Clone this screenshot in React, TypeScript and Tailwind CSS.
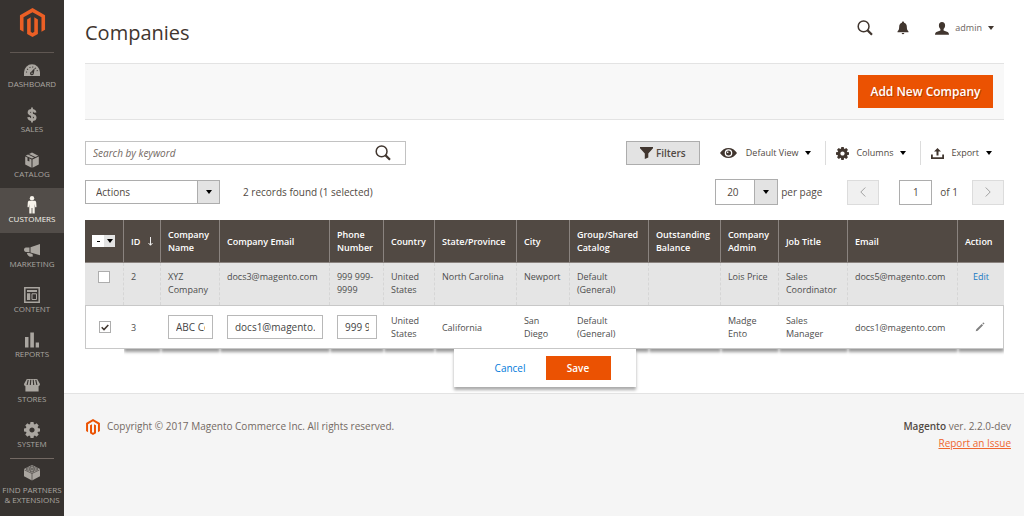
import { useState, type ReactNode } from "react";
import clsx from "clsx";

interface IconProps {
  className?: string;
}

const MagentoLogo = ({ className }: IconProps) => (
  <svg viewBox="0 0 24 24" fill="currentColor" className={className} aria-hidden="true">
    <path d="M12 24l-4.455-2.572v-12l2.97-1.715v12.001l1.485.902 1.485-.902V7.713l2.971 1.715v12L12 24zM22.391 6v12l-2.969 1.714V7.713L12 3.43 4.574 7.713v12.001L1.609 18V6L12 0l10.391 6z" />
  </svg>
);

const SearchIcon = ({ className }: IconProps) => (
  <svg viewBox="0 0 16 16" fill="none" stroke="currentColor" className={className} aria-hidden="true">
    <circle cx="6.6" cy="6.4" r="5.4" strokeWidth="1.5" />
    <path d="M10.6 10.4 15 14.8" strokeWidth="2.2" />
  </svg>
);

const BellIcon = ({ className }: IconProps) => (
  <svg viewBox="0 0 12 14" fill="currentColor" className={className} aria-hidden="true">
    <path d="M6 .6c.7 0 1.1.5 1.1 1.1 1.800.5 2.700 2 2.700 3.900 0 2.900.6 3.900 1.700 4.800v.8H.5v-.8c1.100-.9 1.700-1.900 1.700-4.800 0-1.900.9-3.400 2.700-3.900C4.900 1.100 5.300.6 6 .6zM4.600 12h2.800c-.2.8-.7 1.200-1.400 1.200S4.800 12.800 4.600 12z" />
  </svg>
);

const UserIcon = ({ className }: IconProps) => (
  <svg viewBox="0 0 14 13" fill="currentColor" className={className} aria-hidden="true">
    <path d="M7 0c2 0 3.100 1.300 3.100 3.300 0 1.700-.6 3-1.500 3.800v1.300l4 1.600c.9.4 1.300 1.200 1.400 2.800H0c.1-1.600.5-2.400 1.400-2.800l4-1.600V7.100C4.500 6.300 3.900 5 3.900 3.300 3.900 1.300 5 0 7 0z" />
  </svg>
);

const Caret = ({ className }: IconProps) => (
  <svg viewBox="0 0 6 4" fill="currentColor" className={clsx("h-1 w-1.5 shrink-0", className)} aria-hidden="true">
    <path d="M0 0h6L3 4z" />
  </svg>
);

const FunnelIcon = ({ className }: IconProps) => (
  <svg viewBox="0 0 13 12" fill="currentColor" className={className} aria-hidden="true">
    <path d="M0 0h13v1.200L8.300 6.500v3.900L4.800 12V6.500L0 1.200z" />
  </svg>
);

const EyeIcon = ({ className }: IconProps) => (
  <svg viewBox="0 0 17 10" className={className} aria-hidden="true">
    <path
      fill="currentColor"
      fillRule="evenodd"
      d="M8.500 0C12 0 15 1.900 17 5c-2 3.100-5 5-8.500 5S2 8.100 0 5c2-3.100 5-5 8.500-5zm0 1.200a3.800 3.800 0 1 0 0 7.600 3.800 3.800 0 0 0 0-7.600z"
    />
    <circle cx="8.500" cy="5" r="2.500" fill="currentColor" />
    <circle cx="7.700" cy="4.200" r=".8" fill="#fff" />
  </svg>
);

const GearIcon = ({ className }: IconProps) => (
  <svg viewBox="-8 -8 16 16" fill="currentColor" className={className} aria-hidden="true">
    <circle r="4.400" fill="none" stroke="currentColor" strokeWidth="3.600" />
    {[0, 45, 90, 135, 180, 225, 270, 315].map((angle) => (
      <path key={angle} d="M-2-5.200-1.500-8h3l.5 2.800z" transform={`rotate(${angle})`} />
    ))}
  </svg>
);

const ExportIcon = ({ className }: IconProps) => (
  <svg viewBox="0 0 13 11" fill="currentColor" className={className} aria-hidden="true">
    <path d="M6.500 0 10 3.500H7.500v4h-2v-4H3zM0 6.500h1.800v2.700h9.400V6.500H13V11H0z" />
  </svg>
);

const Chevron = ({ className }: IconProps) => (
  <svg viewBox="0 0 6 10" fill="none" stroke="currentColor" className={className} aria-hidden="true">
    <path d="M5.300.5.800 5l4.500 4.500" />
  </svg>
);

const PencilIcon = ({ className }: IconProps) => (
  <svg viewBox="0 0 10 10" fill="currentColor" className={className} aria-hidden="true">
    <path d="M.7 9.300 1.300 7.300 6.700 1.900l1.400 1.400-5.400 5.400zM7.300 1.300l.8-.8c.4-.3 1.600.9 1.300 1.300l-.8.8z" />
  </svg>
);

const DashboardIcon = ({ className }: IconProps) => (
  <svg viewBox="0 0 16 16" className={className} aria-hidden="true">
    <path fill="currentColor" d="M0 14V10.300a8 8 0 0 1 16 0V14z" />
    <path d="M2.500 10.500A5.500 5.500 0 0 1 13.500 10.500" fill="none" stroke="#373330" strokeWidth="1.100" strokeDasharray="1 1.900" />
    <path fill="#373330" d="M10.800 6 9.800 11.600a1.900 1.900 0 1 1-2.600-1.900z" />
    <circle cx="8" cy="11.300" r=".7" fill="currentColor" />
  </svg>
);

const DollarIcon = ({ className }: IconProps) => (
  <svg viewBox="0 0 16 16" fill="none" stroke="currentColor" className={className} aria-hidden="true">
    <path d="M11.200 5.600C11 3.900 9.800 3.200 8 3.200S4.900 4 4.900 5.400C4.900 8.500 11.300 7 11.300 10.500 11.300 12 10 12.800 8 12.800s-3.300-.9-3.500-2.600" strokeWidth="2.500" />
    <path d="M8 .5v15" strokeWidth="1.800" />
  </svg>
);

const BoxIcon = ({ className }: IconProps) => (
  <svg viewBox="0 0 16 16" fill="currentColor" className={className} aria-hidden="true">
    <path d="M1.200 4.600 7.500 7.500V15.800L1.200 12.400zM14.800 4.600 8.500 7.500V15.800l6.300-3.400zM1.700 3.700 4 2.600l6.100 2.900L8 6.500zM5 2.100 8 .6l6.300 3.100-3.100 1.400z" />
    <path d="M3.500 5.300v3.500l1.900.8V6.300z" fill="#373330" />
  </svg>
);

const PersonIcon = ({ className }: IconProps) => (
  <svg viewBox="0 0 16 18" fill="currentColor" className={className} aria-hidden="true">
    <circle cx="8" cy="2.200" r="2.200" />
    <path d="M5.500 4.700h5c1 0 1.600.7 1.700 1.700l.3 4.300c0 .8-1.200.9-1.400.1L10.700 8v9.500H8.400V12h-.8v5.500H5.300V8l-.4 2.800c-.2.800-1.400.7-1.400-.1l.3-4.300c.1-1 .7-1.700 1.700-1.700z" />
  </svg>
);

const MegaphoneIcon = ({ className }: IconProps) => (
  <svg viewBox="0 0 16 16" fill="currentColor" className={className} aria-hidden="true">
    <path d="M16 2v11.300L6.500 10.400V5.300zM5.500 5.500v4.700L2 10.100C.7 10 0 9 0 7.800s.7-2.200 2-2.300zM2.800 11l2.600.1 3.100 1 .4 2.400-2.500.3C4.500 14.300 3.300 12.900 2.800 11z" />
  </svg>
);

const LayoutIcon = ({ className }: IconProps) => (
  <svg viewBox="0 0 16 16" className={className} aria-hidden="true">
    <path d="M.8.8h14.400v14.400H.8z" fill="none" stroke="currentColor" strokeWidth="1.500" />
    <path d="M3 3h10v2H3zM3 6.300h3.200V13H3z" fill="currentColor" />
    <path d="M8 6.800h4.500v5.700H8z" fill="none" stroke="currentColor" />
  </svg>
);

const BarsIcon = ({ className }: IconProps) => (
  <svg viewBox="0 0 16 16" fill="currentColor" className={className} aria-hidden="true">
    <path d="M1 5h3.500v10.500H1zM6.300.5h3.600v15H6.300zM11.700 10.500H15v5h-3.300z" />
  </svg>
);

const StoreIcon = ({ className }: IconProps) => (
  <svg viewBox="0 0 17 16" className={className} aria-hidden="true">
    <path fill="currentColor" d="M3 1.500h11L17 7c0 1.300-.6 2-1.500 2.200V15h-14V9.200C.6 9 0 8.300 0 7z" />
    <path d="M4.500 2.500 3.300 8M7.200 2.500l-.5 5.500M9.800 2.500l.5 5.500M12.500 2.500l1.200 5.500" stroke="#373330" strokeWidth="1.200" />
  </svg>
);

const BrickIcon = ({ className }: IconProps) => (
  <svg viewBox="0 0 16 16" className={className} aria-hidden="true">
    <path fill="currentColor" d="M0 4.500 8 .5l8 4v7.300L8 16l-8-4.200z" />
    <path d="M.3 5.300 8 9l7.700-3.700M8 9v7" fill="none" stroke="#373330" strokeWidth=".6" />
    <g fill="#aaa6a0" stroke="#373330" strokeWidth=".7">
      <ellipse cx="8" cy="2.700" rx="2" ry="1.100" />
      <ellipse cx="4.300" cy="4.500" rx="2" ry="1.100" />
      <ellipse cx="11.700" cy="4.500" rx="2" ry="1.100" />
      <ellipse cx="8" cy="6.300" rx="2" ry="1.100" />
    </g>
  </svg>
);

const menu = [
  { label: "Dashboard", icon: DashboardIcon },
  { label: "Sales", icon: DollarIcon },
  { label: "Catalog", icon: BoxIcon },
  { label: "Customers", icon: PersonIcon, active: true },
  { label: "Marketing", icon: MegaphoneIcon },
  { label: "Content", icon: LayoutIcon },
  { label: "Reports", icon: BarsIcon },
  { label: "Stores", icon: StoreIcon },
  { label: "System", icon: GearIcon },
];

function Sidebar() {
  return (
    <nav className="w-16 shrink-0 bg-[#373330] text-[8px] leading-[10px] uppercase text-[#aaa6a0]">
      <a href="#" aria-label="Magento Admin" className="flex justify-center pt-2 pb-[15px] text-[#eb5f25]">
        <MagentoLogo className="size-[29px]" />
      </a>
      <div className="mx-[10px] border-t border-[#5f5752]" />
      <ul>
        {menu.map(({ label, icon: Icon, active }) => (
          <li key={label}>
            <a
              href="#"
              className={clsx(
                "flex h-[45px] flex-col items-center pt-2",
                active && "bg-[#524d49] text-[#f7f3eb]"
              )}
            >
              <span className="flex h-[18px] items-center">
                <Icon className={active ? "h-[18px] w-4" : "size-4"} />
              </span>
              {label}
            </a>
          </li>
        ))}
      </ul>
      <div className="mx-[10px] border-t border-[#736963]" />
      <a href="#" className="flex flex-col items-center gap-1 pt-[5px] text-center">
        <BrickIcon className="h-[17px] w-4" />
        <span className="whitespace-nowrap">
          Find Partners
          <br />& Extensions
        </span>
      </a>
    </nav>
  );
}

const columns = [
  { label: "Company Name", width: 59 },
  { label: "Company Email", width: 110 },
  { label: "Phone Number", width: 54 },
  { label: "Country", width: 51 },
  { label: "State/Province", width: 82 },
  { label: "City", width: 53 },
  { label: "Group/Shared Catalog", width: 79 },
  { label: "Outstanding Balance", width: 72 },
  { label: "Company Admin", width: 58 },
  { label: "Job Title", width: 69 },
  { label: "Email", width: 110 },
  { label: "Action", width: 46 },
];

const colWidths = [39, 37, ...columns.map((c) => c.width)];
const TOTAL_WIDTH = colWidths.reduce((sum, width) => sum + width, 0);

const firstRow = [
  "XYZ Company",
  "docs3@magento.com",
  "999 999-9999",
  "United States",
  "North Carolina",
  "Newport",
  "Default (General)",
  "",
  "Lois Price",
  "Sales Coordinator",
  "docs5@magento.com",
];

const secondRow = [
  "United States",
  "California",
  "San Diego",
  "Default (General)",
  "",
  "Madge Ento",
  "Sales Manager",
  "docs1@magento.com",
];

function RowCheckbox({ label, defaultChecked }: { label: string; defaultChecked?: boolean }) {
  const [checked, setChecked] = useState(!!defaultChecked);
  return (
    <span className="mx-auto grid size-3 place-items-center">
      <input
        type="checkbox"
        aria-label={label}
        checked={checked}
        onChange={(e) => setChecked(e.target.checked)}
        className="col-start-1 row-start-1 size-3 appearance-none border border-[#adadad] bg-white"
      />
      {checked && (
        <svg viewBox="0 0 8 7" className="pointer-events-none col-start-1 row-start-1 h-[7px] w-2" aria-hidden="true">
          <path d="M.7 3.300 3 5.600 7.300.9" fill="none" stroke="#41362f" strokeWidth="1.500" />
        </svg>
      )}
    </span>
  );
}

function CellInput({ label, value }: { label: string; value: string }) {
  return (
    <input
      aria-label={label}
      defaultValue={value}
      className="block h-6 w-full border border-[#b8b8b8] bg-white px-[7px] text-[10px] text-[#454545]"
    />
  );
}

function CompaniesTable() {
  const cell = "border-r border-dashed border-[#d6d6d6] py-[7px] pl-[7px] pr-1 align-top";
  // the shadow is clipped at the sides so that neighbouring cells join up
  const editCell =
    "border-y border-[#c8c8c8] py-2 px-[7px] shadow-[0_3px_3px_#9a9a9a] [clip-path:inset(0_0_-8px_0)]";

  return (
    <table className="w-full table-fixed border-separate border-spacing-0 text-left text-[9px] leading-[13px] text-[#4d4d4d]">
      <colgroup>
        {colWidths.map((width, i) => (
          <col key={i} style={{ width: `${(width / TOTAL_WIDTH) * 100}%` }} />
        ))}
      </colgroup>
      <thead className="bg-[#514943] text-white">
        <tr className="h-[43px]">
          <th className="border-r border-b border-[#8a837f] p-0">
            <div className="mx-auto flex h-3 w-[23px] bg-white">
              <input
                type="checkbox"
                aria-label="Select all"
                className="grid h-3 w-3 appearance-none place-items-center before:h-px before:w-[3px] before:bg-black"
              />
              <button aria-label="Selection options" className="flex h-3 w-[11px] items-center justify-center bg-[#e3e3e3] text-black">
                <Caret />
              </button>
            </div>
          </th>
          <th className="border-r border-b border-[#8a837f] px-[7px] font-semibold">
            <span className="flex items-center justify-between">
              ID
              <svg viewBox="0 0 5 9" className="h-[9px] w-[5px]" fill="none" stroke="currentColor" aria-hidden="true">
                <path d="M2.500 0v8M.5 6l2 2.300 2-2.300" strokeWidth=".9" />
              </svg>
            </span>
          </th>
          {columns.map(({ label }) => (
            <th key={label} className="border-r border-b border-[#8a837f] py-0 pl-[7px] pr-0 font-semibold last:border-r-0">
              {label}
            </th>
          ))}
        </tr>
      </thead>
      <tbody>
        <tr className="h-[42px] bg-[#e5e5e5]">
          <td className="border-r border-dashed border-[#d6d6d6] pt-2 align-top">
            <RowCheckbox label="Select XYZ Company" />
          </td>
          <td className={cell}>2</td>
          {firstRow.map((value, i) => (
            <td key={i} className={cell}>
              {value}
            </td>
          ))}
          <td className="py-[7px] text-center align-top">
            <a href="#" className="text-[#1979c3]">Edit</a>
          </td>
        </tr>
        <tr className="h-[43px] bg-white">
          <td className="border-y border-l border-[#c8c8c8] p-0">
            <RowCheckbox label="Select ABC Company" defaultChecked />
          </td>
          <td className={editCell}>3</td>
          <td className={editCell}>
            <CellInput label="Company Name" value="ABC Company" />
          </td>
          <td className={editCell}>
            <CellInput label="Company Email" value="docs1@magento.com" />
          </td>
          <td className={editCell}>
            <CellInput label="Phone Number" value="999 999-9999" />
          </td>
          {secondRow.map((value, i) => (
            <td key={i} className={editCell}>
              {value}
            </td>
          ))}
          <td className={clsx(editCell, "border-r")}>
            <PencilIcon className="mx-auto size-[10px] text-[#808080]" />
          </td>
        </tr>
      </tbody>
    </table>
  );
}

function ToolButton({ icon, children, className }: { icon: ReactNode; children: ReactNode; className?: string }) {
  return (
    <button className={clsx("flex h-6 items-center text-[9px] text-[#41362f]", className)}>
      {icon}
      <span className="mr-[7px] text-[#514943]">{children}</span>
      <Caret className="text-black" />
    </button>
  );
}

export default function App() {
  return (
    <div className="flex min-h-screen bg-white font-['Open_Sans','Noto_Sans',sans-serif] text-[10px] text-[#514943]">
      <Sidebar />
      <div className="flex min-w-0 flex-1 flex-col">
        <main className="pr-5 pb-[6px] pl-[21px]">
          <header className="flex h-[63px] items-center justify-between pr-[10px] pb-[7px] text-[#41362f]">
            <h1 className="pt-[9px] text-[20px] leading-7">Companies</h1>
            <div className="flex items-center">
              <button aria-label="Search" className="mr-6">
                <SearchIcon className="size-4" />
              </button>
              <button aria-label="Notifications" className="mr-[26px]">
                <BellIcon className="h-[14px] w-3" />
              </button>
              <button className="flex items-center text-[9px]">
                <UserIcon className="mr-[6px] h-[13px] w-[14px]" />
                <span className="mr-[6px] text-[#6b6460]">admin</span>
                <Caret />
              </button>
            </div>
          </header>

          <div className="flex h-[57px] items-center justify-end border-y border-[#e3e3e3] bg-[#f8f8f8] pr-[11px]">
            <button className="h-[33px] w-[135px] bg-[#eb5202] text-[12px] font-semibold text-white [text-shadow:1px_1px_0_#00000040]">
              Add New Company
            </button>
          </div>

          <div className="mt-[21px] flex items-center justify-between">
            <div className="flex h-6 w-[321px] items-center border border-[#c2c2c2] pr-[14px] text-[#41362f]">
              <input
                type="search"
                aria-label="Search by keyword"
                placeholder="Search by keyword"
                className="h-full min-w-0 flex-1 px-[7px] outline-none placeholder:text-[#736963] placeholder:italic"
              />
              <button aria-label="Search">
                <SearchIcon className="size-4" />
              </button>
            </div>
            <div className="flex items-center pr-3">
              <button className="mr-5 flex h-6 w-[74px] items-center justify-center gap-[3px] border border-[#adadad] bg-[#e3e3e3] font-semibold">
                <FunnelIcon className="h-3 w-[13px] text-[#41362f]" />
                Filters
              </button>
              <ToolButton className="pr-[14px]" icon={<EyeIcon className="mr-[9px] h-[10px] w-[17px]" />}>
                Default View
              </ToolButton>
              <ToolButton className="border-l border-[#dcdcdc] pr-[14px] pl-[10px]" icon={<GearIcon className="mr-[7px] size-[13px]" />}>
                Columns
              </ToolButton>
              <ToolButton className="border-l border-[#dcdcdc] pl-[10px]" icon={<ExportIcon className="mr-[7px] h-[11px] w-[13px]" />}>
                Export
              </ToolButton>
            </div>
          </div>

          <div className="mt-[14px] flex items-center justify-between">
            <div className="flex items-center gap-[23px]">
              <div className="relative">
                <select aria-label="Actions" className="block h-6 w-[135px] appearance-none border border-[#adadad] bg-white pl-[10px]">
                  <option>Actions</option>
                  <option>Delete</option>
                  <option>Edit</option>
                </select>
                <span className="pointer-events-none absolute inset-y-0 right-0 flex w-[23px] items-center justify-center border border-[#adadad] bg-[#e3e3e3] text-black">
                  <Caret />
                </span>
              </div>
              <p>2 records found (1 selected)</p>
            </div>
            <div className="flex items-center">
              <label className="mr-[25px] flex items-center gap-[3px]">
                <span className="relative">
                  <select className="block h-[26px] w-[63px] appearance-none border border-[#adadad] bg-white pl-[11px]">
                    <option>20</option>
                    <option>50</option>
                    <option>100</option>
                  </select>
                  <span className="pointer-events-none absolute inset-y-0 right-0 flex w-6 items-center justify-center border border-[#adadad] bg-[#e3e3e3] text-black">
                    <Caret />
                  </span>
                </span>
                per page
              </label>
              <button aria-label="Previous page" className="mr-5 flex h-[25px] w-8 items-center justify-center border border-[#dcdcdc] bg-[#f0f0f0] text-[#a0a0a0]">
                <Chevron className="h-[10px] w-[6px]" />
              </button>
              <label className="mr-[14px] flex items-center gap-2">
                <input
                  aria-label="Page number"
                  defaultValue="1"
                  className="h-[25px] w-[33px] border border-[#adadad] text-center"
                />
                of 1
              </label>
              <button aria-label="Next page" className="flex h-[25px] w-8 items-center justify-center border border-[#dcdcdc] bg-[#f0f0f0] text-[#a0a0a0]">
                <Chevron className="h-[10px] w-[6px] rotate-180" />
              </button>
            </div>
          </div>

          <div className="mt-[15px]">
            <CompaniesTable />
            <div className="relative z-10 mx-auto flex h-[38px] w-[182px] items-center justify-end gap-5 bg-white pr-[25px] shadow-[0_3px_3px_#aaaaaa]">
              <button className="font-medium text-[#007bdb]">Cancel</button>
              <button className="h-6 w-[65px] bg-[#eb5202] font-semibold text-white">Save</button>
            </div>
          </div>
        </main>

        <footer className="flex flex-1 items-start justify-between border-t border-[#e3e3e3] bg-[#f5f5f5] pt-6 pr-[13px] pl-[21px] leading-[17px] text-[#736963]">
          <p className="flex items-center gap-[6px]">
            <MagentoLogo className="size-4 text-[#eb5202]" />
            Copyright © 2017 Magento Commerce Inc. All rights reserved.
          </p>
          <div className="text-right">
            <p>
              <b className="font-semibold text-[#514943]">Magento</b> ver. 2.2.0-dev
            </p>
            <a href="#" className="text-[#ef672f] underline">Report an Issue</a>
          </div>
        </footer>
      </div>
    </div>
  );
}
